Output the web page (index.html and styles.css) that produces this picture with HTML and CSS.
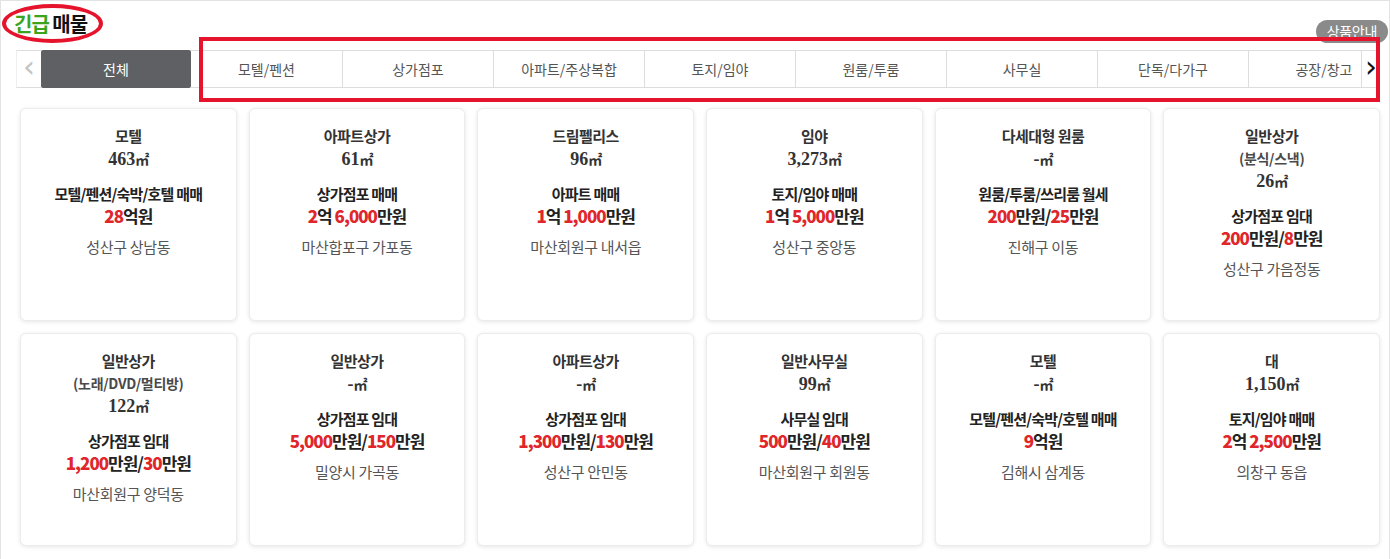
FILE: index.html
```html
<!DOCTYPE html>
<html>
<head>
    <title>긴급 매물</title>
    <link rel="stylesheet" href="styles.css">
</head>
<body>
<div class="page">
    <!-- header -->
    <div class="header">
        <h2 class="title"><span class="green">긴급</span> 매물</h2>
        <span class="badge">상품안내</span>
    </div>

    <!-- tab menu -->
    <div class="tabbar">
        <div class="arrow prev">&lsaquo;</div>
        <div class="tab-all">전체</div>
        <div class="tabs">
            <div class="tab">모텔/펜션</div>
            <div class="tab">상가점포</div>
            <div class="tab">아파트/주상복합</div>
            <div class="tab">토지/임야</div>
            <div class="tab">원룸/투룸</div>
            <div class="tab">사무실</div>
            <div class="tab">단독/다가구</div>
            <div class="tab">공장/창고</div>
        </div>
        <div class="arrow next">&rsaquo;</div>
    </div>

    <!-- list -->
    <div class="cards">
        <div class="card">
            <p class="name">모텔</p>
            <p class="area">463<span class="unit">㎡</span></p>
            <p class="kind">모텔/펜션/숙박/호텔 매매</p>
            <p class="price"><b>28</b>억원</p>
            <p class="loc">성산구 상남동</p>
        </div>
        <div class="card">
            <p class="name">아파트상가</p>
            <p class="area">61<span class="unit">㎡</span></p>
            <p class="kind">상가점포 매매</p>
            <p class="price"><b>2</b>억 <b>6,000</b>만원</p>
            <p class="loc">마산합포구 가포동</p>
        </div>
        <div class="card">
            <p class="name">드림펠리스</p>
            <p class="area">96<span class="unit">㎡</span></p>
            <p class="kind">아파트 매매</p>
            <p class="price"><b>1</b>억 <b>1,000</b>만원</p>
            <p class="loc">마산회원구 내서읍</p>
        </div>
        <div class="card">
            <p class="name">임야</p>
            <p class="area">3,273<span class="unit">㎡</span></p>
            <p class="kind">토지/임야 매매</p>
            <p class="price"><b>1</b>억 <b>5,000</b>만원</p>
            <p class="loc">성산구 중앙동</p>
        </div>
        <div class="card">
            <p class="name">다세대형 원룸</p>
            <p class="area">-<span class="unit">㎡</span></p>
            <p class="kind">원룸/투룸/쓰리룸 월세</p>
            <p class="price"><b>200</b>만원/<b>25</b>만원</p>
            <p class="loc">진해구 이동</p>
        </div>
        <div class="card">
            <p class="name">일반상가</p>
            <p class="sub">(분식/스낵)</p>
            <p class="area">26<span class="unit">㎡</span></p>
            <p class="kind">상가점포 임대</p>
            <p class="price"><b>200</b>만원/<b>8</b>만원</p>
            <p class="loc">성산구 가음정동</p>
        </div>

        <div class="card">
            <p class="name">일반상가</p>
            <p class="sub">(노래/DVD/멀티방)</p>
            <p class="area">122<span class="unit">㎡</span></p>
            <p class="kind">상가점포 임대</p>
            <p class="price"><b>1,200</b>만원/<b>30</b>만원</p>
            <p class="loc">마산회원구 양덕동</p>
        </div>
        <div class="card">
            <p class="name">일반상가</p>
            <p class="area">-<span class="unit">㎡</span></p>
            <p class="kind">상가점포 임대</p>
            <p class="price"><b>5,000</b>만원/<b>150</b>만원</p>
            <p class="loc">밀양시 가곡동</p>
        </div>
        <div class="card">
            <p class="name">아파트상가</p>
            <p class="area">-<span class="unit">㎡</span></p>
            <p class="kind">상가점포 임대</p>
            <p class="price"><b>1,300</b>만원/<b>130</b>만원</p>
            <p class="loc">성산구 안민동</p>
        </div>
        <div class="card">
            <p class="name">일반사무실</p>
            <p class="area">99<span class="unit">㎡</span></p>
            <p class="kind">사무실 임대</p>
            <p class="price"><b>500</b>만원/<b>40</b>만원</p>
            <p class="loc">마산회원구 회원동</p>
        </div>
        <div class="card">
            <p class="name">모텔</p>
            <p class="area">-<span class="unit">㎡</span></p>
            <p class="kind">모텔/펜션/숙박/호텔 매매</p>
            <p class="price"><b>9</b>억원</p>
            <p class="loc">김해시 삼계동</p>
        </div>
        <div class="card">
            <p class="name">대</p>
            <p class="area">1,150<span class="unit">㎡</span></p>
            <p class="kind">토지/임야 매매</p>
            <p class="price"><b>2</b>억 <b>2,500</b>만원</p>
            <p class="loc">의창구 동읍</p>
        </div>
    </div>

    <!-- red marks -->
    <div class="mark-circle"></div>
    <div class="mark-box"></div>
</div>
</body>
</html>
```

FILE: styles.css
```css
/* base */
body {
    margin: 0;
    background-color: #fff;
    font-family: "Noto Sans CJK KR", "Noto Sans", sans-serif;
    color: #333;
}

.page {
    position: relative;
    height: 558px;
    overflow: hidden;
    border-top: 1px solid #e3e3e3;
    border-left: 1px solid #e3e3e3;
    border-right: 1px solid #e3e3e3;
}

/* header */
.header {
    display: flex;
    justify-content: space-between;
    align-items: flex-end;
    height: 49px;
}

.title {
    margin: 0 0 13px 13px;
    font-size: 20px;
    line-height: 26px;
    font-weight: bold;
    letter-spacing: -1px;
    color: #111;
}

.green {
    color: #3aa51c;
}

.badge {
    margin: 0 1px 7px 0;
    padding: 0 11px;
    height: 23px;
    line-height: 23px;
    border-radius: 12px;
    background-color: #8a8a8a;
    color: #fff;
    font-size: 14px;
    letter-spacing: -0.3px;
}

/* tab menu */
.tabbar {
    display: flex;
    height: 38px;
    margin: 0 9px 0 15px;
}

.arrow {
    width: 24px;
    height: 36px;
    border-top: 1px solid #ddd;
    border-bottom: 1px solid #ddd;
    font-family: "DejaVu Sans", sans-serif;
    font-size: 30px;
    line-height: 32px;
    text-align: center;
}

.prev {
    border-left: 1px solid #eee;
    color: #c4c4c4;
}

.next {
    width: 15px;
    color: #111;
    text-align: left;
    padding-left: 3px;
}

.tab-all {
    width: 150px;
    height: 38px;
    line-height: 38px;
    background-color: #5e6064;
    color: #fff;
    font-size: 14px;
    text-align: center;
    border-radius: 2px;
}

.tabs {
    display: flex;
    flex: 1;
    overflow: hidden;
    border-top: 1px solid #ddd;
    border-bottom: 1px solid #ddd;
    border-right: 1px solid #ddd;
}

.tab {
    flex-shrink: 0;
    width: 150px;
    height: 36px;
    line-height: 36px;
    border-left: 1px solid #ddd;
    text-align: center;
    font-size: 14px;
    color: #555;
}

.tab:first-child {
    border-left: none;
    width: 151px;
}

/* list */
.cards {
    display: grid;
    grid-template-columns: repeat(6, 1fr);
    grid-auto-rows: 213px;
    gap: 12px;
    margin: 20px 9px 0 19px;
}

.card {
    box-sizing: border-box;
    padding-top: 15px;
    border: 1px solid #ececec;
    border-radius: 6px;
    background-color: #fff;
    box-shadow: 0px 1px 4px rgba(0, 0, 0, 0.1);
    text-align: center;
}

.card p {
    margin: 0;
}

.name {
    font-size: 15px;
    line-height: 23px;
    font-weight: bold;
    letter-spacing: -0.5px;
    color: #333;
}

.sub {
    font-size: 14px;
    line-height: 22px;
    font-weight: bold;
    letter-spacing: -0.3px;
    color: #4a4a4a;
}

.area {
    font-family: "Liberation Serif", "Noto Sans CJK KR", serif;
    font-size: 18px;
    line-height: 24px;
    font-weight: bold;
    color: #333;
}

.unit {
    font-family: "Noto Sans CJK KR", sans-serif;
    font-size: 14px;
    letter-spacing: -1px;
}

.kind {
    margin-top: 12px !important;
    font-size: 15px;
    line-height: 22px;
    font-weight: bold;
    letter-spacing: -0.8px;
    color: #222;
}

.price {
    font-size: 17px;
    line-height: 22px;
    font-weight: bold;
    letter-spacing: -1px;
    color: #222;
}

.price b {
    color: #e0262b;
}

.loc {
    margin-top: 9px !important;
    font-size: 15px;
    line-height: 22px;
    letter-spacing: -0.3px;
    color: #555;
}

/* red marks */
.mark-circle {
    position: absolute;
    left: 1px;
    top: 3px;
    width: 93px;
    height: 31px;
    border: 4px solid #e5142c;
    border-radius: 50%;
}

.mark-box {
    position: absolute;
    left: 198px;
    top: 36px;
    width: 1173px;
    height: 57px;
    border: 4px solid #e5142c;
}
```
